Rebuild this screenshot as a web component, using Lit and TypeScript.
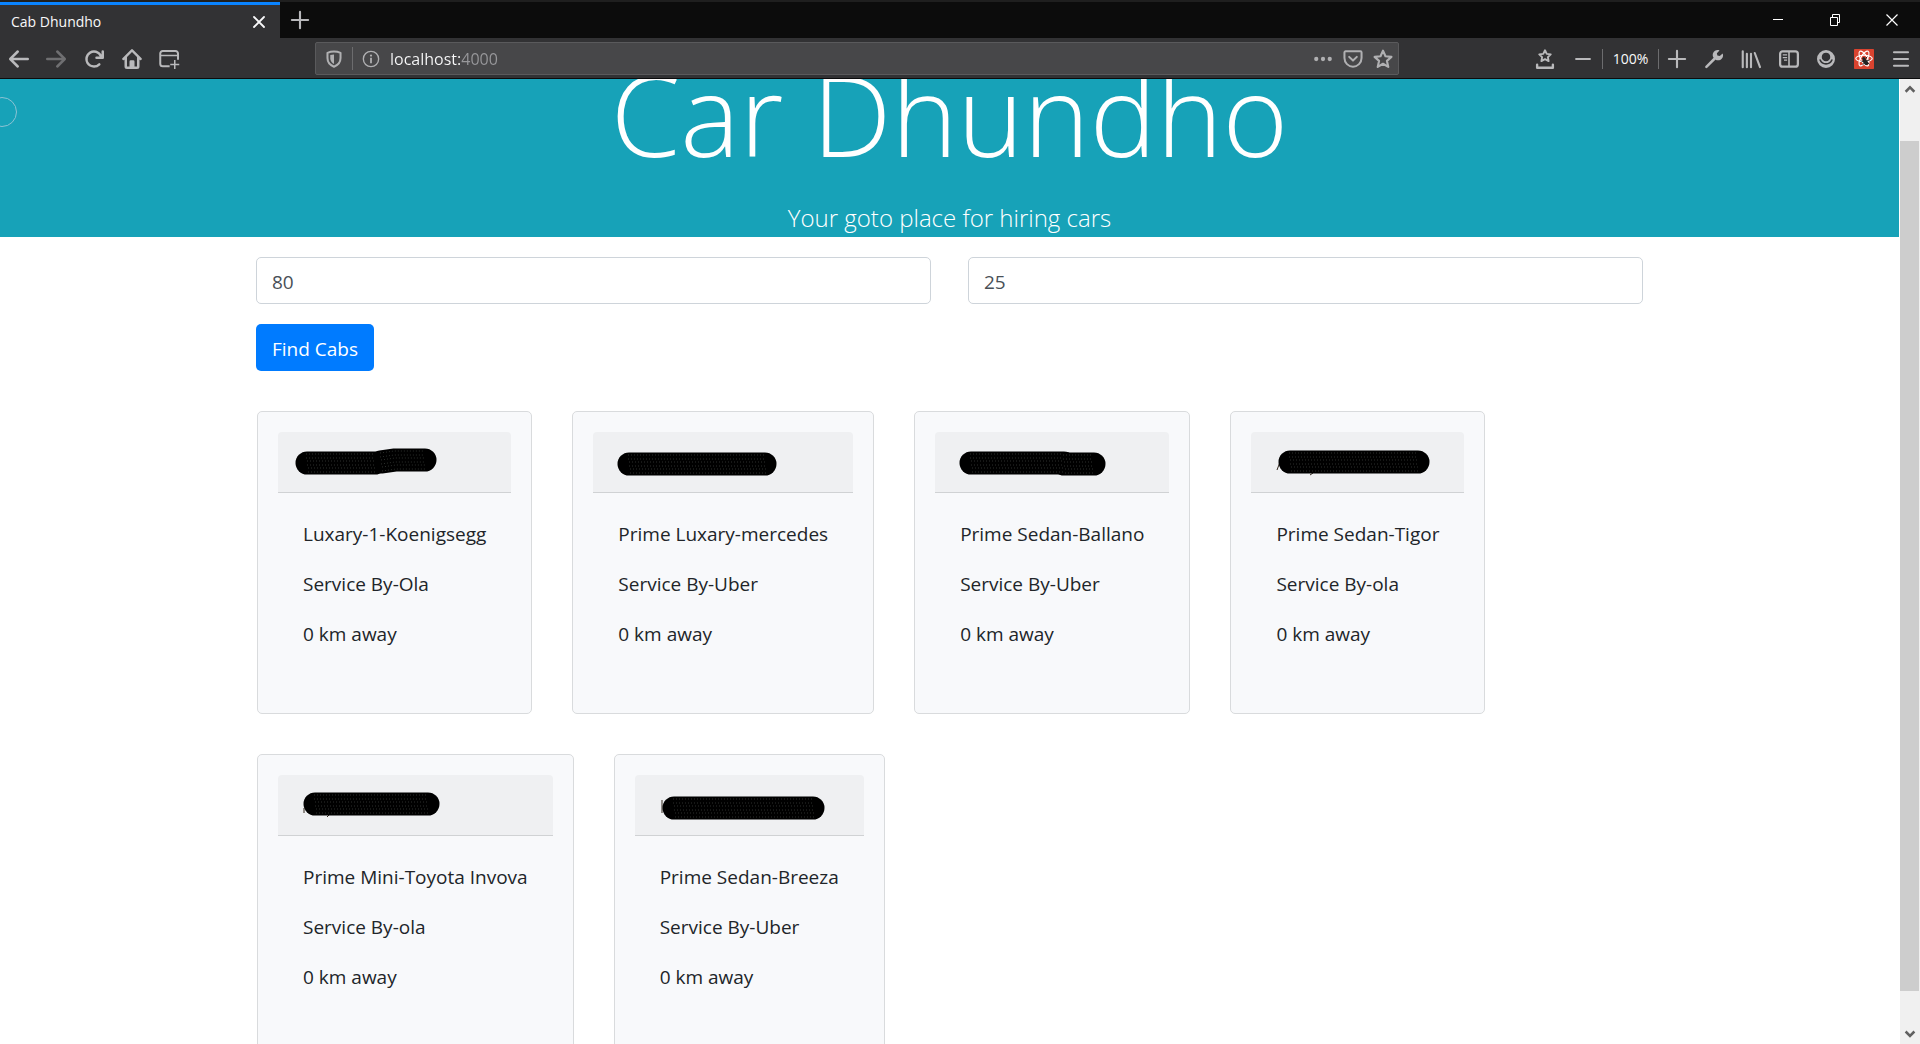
import { LitElement, html, svg, css } from "lit";
import { customElement, property } from "lit/decorators.js";

interface Stroke {
  points: string;
}

interface Cab {
  model: string;
  service: string;
  distance: string;
  strokes: Stroke[];
  traces: string;
}

const CABS: Cab[] = [
  { model: "Luxary-1-Koenigsegg", service: "Ola", distance: "0", strokes: [{ points: "4,16 72,16" }, { points: "78,15 92,13 122,13" }], traces: "" },
  { model: "Prime Luxary-mercedes", service: "Uber", distance: "0", strokes: [{ points: "11,17 147,17" }], traces: "" },
  { model: "Prime Sedan-Ballano", service: "Uber", distance: "0", strokes: [{ points: "11,16 104,16" }, { points: "104,17 134,17" }], traces: "" },
  { model: "Prime Sedan-Tigor", service: "ola", distance: "0", strokes: [{ points: "14,15 142,15" }], traces: "M1 23 L4 15 M34 28 L37 26" },
  { model: "Prime Mini-Toyota Invova", service: "ola", distance: "0", strokes: [{ points: "12,14 125,14" }], traces: "M1 18 V23 M24 27 L27 24" },
  { model: "Prime Sedan-Breeza", service: "Uber", distance: "0", strokes: [{ points: "14,18 153,18" }], traces: "M2 10 V23" },
];

const icons = {
  back: svg`<path d="M15 7H3.414l4.293-4.293a1 1 0 0 0-1.414-1.414l-6 6a1 1 0 0 0 0 1.414l6 6a1 1 0 0 0 1.414-1.414L3.414 9H15a1 1 0 0 0 0-2z"/>`,
  forward: svg`<path d="M1 7h11.586L8.293 2.707a1 1 0 0 1 1.414-1.414l6 6a1 1 0 0 1 0 1.414l-6 6a1 1 0 0 1-1.414-1.414L12.586 9H1a1 1 0 0 1 0-2z"/>`,
  reload: svg`<path d="M15 1a1 1 0 0 0-1 1v2.418A6.995 6.995 0 1 0 8 15a6.954 6.954 0 0 0 4.95-2.05 1 1 0 0 0-1.414-1.414A5.019 5.019 0 1 1 12.549 6H10a1 1 0 0 0 0 2h5a1 1 0 0 0 1-1V2a1 1 0 0 0-1-1z"/>`,
  home: svg`<path fill-rule="evenodd" d="M8.7.3a1 1 0 0 0-1.4 0l-7 7a1 1 0 0 0 1.4 1.4l.3-.3V14a2 2 0 0 0 2 2h8a2 2 0 0 0 2-2V8.400l.3.3a1 1 0 0 0 1.400-1.400zM12 14h-2v-4a1 1 0 0 0-1-1H7a1 1 0 0 0-1 1v4H4V6.400l4-4 4 4z"/><path d="M7.200 11h1.600v3H7.200z"/>`,
  newWindow: svg`<g fill="none" stroke="currentColor"><path stroke-width="1.600" d="M8.500 13.800H3A2 2 0 0 1 1 11.800V3.600A2 2 0 0 1 3 1.600h10.200a2 2 0 0 1 2 2v5"/><path stroke-width="1.200" d="M1 5.200h14.200"/><path stroke-width="1.200" d="M12.600 8.700v7.300M9 12.300h7.200"/></g>`,
  shield: svg`<path fill="none" stroke="currentColor" stroke-width="1.800" stroke-linejoin="round" d="M8 1.400c2 0 4 .4 5.800 1.200v4.600c0 3.400-2 6.200-5.800 7.700-3.800-1.500-5.800-4.300-5.800-7.700V2.600C4 1.800 6 1.400 8 1.400z"/><path d="M8 4c-1.200 0-2.300.2-3.300.5V7.300c0 2.200 1.200 4 3.300 5.100z"/>`,
  info: svg`<circle cx="8" cy="8" r="6.800" fill="none" stroke="currentColor" stroke-width="1.200"/><circle cx="8" cy="4.900" r="1"/><path d="M7.200 6.800h1.600v5H7.200z"/>`,
  dots: svg`<circle cx="2" cy="8" r="1.900"/><circle cx="8" cy="8" r="1.900"/><circle cx="14" cy="8" r="1.900"/>`,
  pocket: svg`<path fill="none" stroke="currentColor" stroke-width="1.800" stroke-linejoin="round" d="M1.400 1.200h13.200a1 1 0 0 1 1 1v5a7.600 7.600 0 0 1-15.200 0V2.200a1 1 0 0 1 1-1z"/><path fill="none" stroke="currentColor" stroke-width="1.800" stroke-linecap="round" stroke-linejoin="round" d="M4.600 6.100 8 9.400l3.400-3.300"/>`,
  star: svg`<path fill="none" stroke="currentColor" stroke-width="1.900" stroke-linejoin="round" d="M8 .6l2.200 4.900 5.300.6-4 3.600 1.200 5.300L8 12.200l-4.700 2.800 1.200-5.300-4-3.600 5.300-.6z"/>`,
  starTray: svg`<path fill="none" stroke="currentColor" stroke-width="1.500" stroke-linejoin="round" d="M8 1l1.400 2.900 3.200.4-2.300 2.200.6 3.200L8 8.100 5.100 9.700l.6-3.200-2.300-2.200 3.200-.4z"/><path fill="none" stroke="currentColor" stroke-width="1.900" stroke-linecap="round" stroke-linejoin="round" d="M1.700 12.600V15h12.600v-2.400"/>`,
  minus: svg`<path fill="none" stroke="currentColor" stroke-width="1.700" stroke-linecap="round" d="M2.500 8h11"/>`,
  plus: svg`<path fill="none" stroke="currentColor" stroke-width="1.700" stroke-linecap="round" d="M1.500 8h13M8 1.500v13"/>`,
  wrench: svg`<path fill="none" stroke="currentColor" stroke-width="2" stroke-linecap="round" d="M1.900 14.300 8.600 7.600"/><path d="M14.900 3.600 12.600 5.600 10.700 5.200 10.300 3.400 12.400 1.200C10.500.4 8.200 1.200 7.300 3.200c-.5 1.200-.4 2.300.1 3.300L9.600 8.700c1 .5 2.200.5 3.300 0 2-.9 2.900-3.200 2-5.100z"/>`,
  library: svg`<g fill="none" stroke="currentColor" stroke-width="1.700" stroke-linecap="round"><path d="M1.400 1.800v12.800M4.700 3.800v10.800M8 3.800v10.800M11 3.200l4.200 11.300"/></g>`,
  sidebar: svg`<rect x=".9" y="1.900" width="14.200" height="12.200" rx="2" fill="none" stroke="currentColor" stroke-width="1.800"/><path fill="none" stroke="currentColor" stroke-width="1.300" d="M8 2v12"/><path fill="none" stroke="currentColor" d="M3 4.700h3.500M3 6.800h3.500M4 8.900h2.500"/>`,
  account: svg`<path fill-rule="evenodd" d="M8 .8a7.200 7.200 0 1 0 0 14.400A7.200 7.200 0 0 0 8 .8zM8 2.900a3.400 3.400 0 1 1 0 6.800 3.400 3.400 0 0 1 0-6.800z"/><path fill="none" stroke="#323234" stroke-width="1.300" stroke-linecap="round" d="M3.300 8.800c.8 1.900 2.600 3.100 4.700 3.100s3.900-1.200 4.700-3.100"/>`,
  menu: svg`<path fill="none" stroke="currentColor" stroke-width="1.700" stroke-linecap="round" d="M2.400 2.600h11.200M2.400 8h11.200M2.400 13.400h11.200"/>`,
  react: svg`<rect width="16" height="16" rx=".6" fill="#d9432f"/><g fill="none" stroke="#fff" stroke-width=".9"><ellipse cx="8" cy="7.600" rx="6.600" ry="2.600"/><ellipse cx="8" cy="7.600" rx="6.600" ry="2.600" transform="rotate(60 8 7.600)"/><ellipse cx="8" cy="7.600" rx="6.600" ry="2.600" transform="rotate(120 8 7.600)"/></g><ellipse cx="9.200" cy="10.400" rx="1.700" ry="2.700" transform="rotate(-35 9.200 10.400)" fill="#222"/><circle cx="7.800" cy="7.600" r="1.200" fill="#222"/><path d="M5.900 9.600l2 .5M6.800 12.600l1.500-1.300M9.400 7.800l.8-1.400M10.600 9.200l1.900-.4M11 11l1.500 1.300" stroke="#222" stroke-width=".8"/>`,
  tabClose: svg`<path fill="none" stroke="currentColor" stroke-width="1.800" stroke-linecap="round" d="M3 3l10 10M13 3 3 13"/>`,
  winMin: svg`<path fill="none" stroke="currentColor" d="M3 7.500h10"/>`,
  winRestore: svg`<path fill="none" stroke="currentColor" d="M3.500 5.500h7v8h-7zM5.500 5.500v-3h7v8h-2"/>`,
  winClose: svg`<path fill="none" stroke="currentColor" stroke-width="1.200" d="M2.500 2.500l11 11M13.500 2.500l-11 11"/>`,
  up: svg`<path fill="none" stroke="currentColor" stroke-width="2" d="M4.500 10.200 8 6.700l3.500 3.500"/>`,
  down: svg`<path fill="none" stroke="currentColor" stroke-width="2" d="M4.500 6 8 9.500 11.500 6"/>`,
};

const icon = (name: keyof typeof icons) =>
  html`<svg class="icon" viewBox="0 0 16 16" fill="currentColor" aria-hidden="true">${icons[name]}</svg>`;

const button = (name: keyof typeof icons, label: string, extra = "") =>
  html`<button type="button" class="tool ${extra}" aria-label=${label}>${icon(name)}</button>`;

const shared = css`
  *, *::before, *::after { box-sizing: border-box; }
  button {
    margin: 0; padding: 0; border: 0; background: none; color: inherit;
    font: inherit; display: flex; align-items: center; justify-content: center;
  }
  .icon { display: block; width: 20px; height: 20px; overflow: visible; }
`;

@customElement("browser-chrome")
export class BrowserChrome extends LitElement {
  static styles = [shared, css`
    :host { display: block; flex: none; font: 14px/20px "Open Sans", sans-serif; color: #b9b9bb; background: #323234; border-bottom: 1px solid #0c0c0d; }
    .tabs { display: flex; height: 38px; background: #0c0c0c; border-top: 2px solid #1f1f1f; }
    .tab { width: 280px; display: flex; align-items: center; background: #323234; border-top: 3px solid #0a84ff; padding-left: 11px; color: #f9f9fa; }
    .tab-title { flex: 1; }
    .tab .tool { width: 42px; height: 33px; }
    .new { width: 40px; }
    .gap { flex: 1; }
    .win { width: 57px; color: #fff; }
    .win .icon, .tab .icon { width: 16px; height: 16px; }
    .toolbar { display: flex; height: 40px; padding: 4px 0 3px; }
    .group { display: flex; }
    .nav { width: 188px; }
    .extras { width: 225px; }
    .nav .tool, .extras .tool { flex: 1; }
    .dim { color: #6f6f71; }
    .url { flex: 1; display: flex; align-items: center; margin: 0 127px; background: #474749; border: 1px solid #5a5a5c; border-radius: 2px; color: #b0b0b2; }
    .site { width: 36px; }
    .page { width: 30px; }
    .page .icon, .site .icon { width: 18px; height: 18px; }
    .url .rule { height: 23px; }
    .rule { width: 1px; height: 20px; background: #6c6c6e; align-self: center; }
    .address {
      flex: 1; min-width: 0; border: 0; outline: 0; padding: 0 1px; height: 28px;
      font: 16px/28px "Open Sans", sans-serif; color: transparent;
      background: linear-gradient(90deg, #f9f9fa 71px, #98989b 71px); background-clip: text; -webkit-background-clip: text;
    }
    .zoom-out { width: 38px; }
    .zoom-in { width: 36px; }
    .level { width: 55px; color: #f9f9fa; }
  `];

  render() {
    return html`
      <div class="tabs">
        <div class="tab"><span class="tab-title">Cab Dhundho</span>${button("tabClose", "Close tab")}</div>
        ${button("plus", "New tab", "new")}
        <div class="gap"></div>
        ${button("winMin", "Minimize", "win")}
        ${button("winRestore", "Restore", "win")}
        ${button("winClose", "Close", "win")}
      </div>
      <div class="toolbar">
        <div class="group nav">
          ${button("back", "Back")}${button("forward", "Forward", "dim")}${button("reload", "Reload")}
          ${button("home", "Home")}${button("newWindow", "New window")}
        </div>
        <div class="url">
          ${button("shield", "Tracking protection", "site")}
          <span class="rule"></span>
          ${button("info", "Site information", "site")}
          <input class="address" type="text" aria-label="Address" .value=${"localhost:4000"} />
          ${button("dots", "Page actions", "page")}${button("pocket", "Save to Pocket", "page")}${button("star", "Bookmark", "page")}
        </div>
        <div class="group">
          ${button("starTray", "Bookmarks", "zoom-out")}${button("minus", "Zoom out", "zoom-out")}
          <span class="rule"></span>
          <button type="button" class="level" aria-label="Reset zoom">100%</button>
          <span class="rule"></span>
          ${button("plus", "Zoom in", "zoom-in")}
        </div>
        <div class="group extras">
          ${button("wrench", "Developer tools")}${button("library", "Library")}${button("sidebar", "Sidebars")}
          ${button("account", "Account")}${button("react", "React tools")}${button("menu", "Menu")}
        </div>
      </div>`;
  }
}

@customElement("cab-card")
export class CabCard extends LitElement {
  @property({ attribute: false }) cab!: Cab;

  static styles = [shared, css`
    :host { display: block; }
    .card { background: #f8f9fb; border: 1px solid #d9dbdd; border-radius: 5px; padding: 20px 20px 19px; }
    .head { padding: 15px 25px; background: #eff0f2; border-bottom: 1px solid #d0d2d4; border-radius: 4px 4px 0 0; }
    .mark { display: block; width: 120px; height: 30px; overflow: visible; }
    .ink { fill: none; stroke: #000; stroke-width: 23; stroke-linecap: round; stroke-linejoin: round; }
    .grain { fill: none; stroke: #2c2f2c; stroke-width: 1; stroke-dasharray: 1 2; }
    .trace { fill: none; stroke: #33281f; stroke-width: 1; }
    .body { padding: 26px 25px 25px; }
    p { margin: 0 0 20px; white-space: nowrap; }
  `];

  render() {
    const { model, service, distance, strokes, traces } = this.cab;
    return html`
      <article class="card">
        <div class="head">
          <svg class="mark" aria-hidden="true">
            <path class="trace" d=${traces}></path>
            ${strokes.map((s) => svg`<polyline class="ink" points=${s.points}></polyline>`)}
            ${strokes.map((s) => [-9, -5, -2, 2, 5, 9].map((dy) =>
              svg`<polyline class="grain" points=${s.points} transform=${`translate(${dy % 2} ${dy})`}></polyline>`))}
          </svg>
        </div>
        <div class="body">
          <p>${model}</p>
          <p>Service By-${service}</p>
          <p>${distance} km away</p>
        </div>
      </article>`;
  }
}

@customElement("app-root")
export class AppRoot extends LitElement {
  static styles = [shared, css`
    :host { display: flex; flex-direction: column; height: 100vh; overflow: hidden; font: 19px/30px "Open Sans", sans-serif; color: #212529; background: #fff; }
    .view { flex: 1; min-height: 0; display: flex; }
    .page { flex: 1; min-width: 0; overflow: hidden; position: relative; }
    .hero { height: 158px; display: flex; flex-direction: column; justify-content: flex-end; align-items: center; overflow: hidden; background: #17a2b8; color: #fff; }
    h1 { flex: none; margin: 0 0 13px; font-size: 112px; line-height: 144px; font-weight: 300; }
    .lead { flex: none; margin: 0; font-size: 24px; line-height: 38px; font-weight: 300; }
    .ring { position: absolute; left: -13px; top: 18px; width: 30px; height: 30px; border: 1px solid #8cc3d4; border-radius: 15px; }
    .container { max-width: 1425px; margin: 0 auto; padding: 20px 19px 0; }
    .fields { display: grid; grid-template-columns: 1fr 1fr; gap: 37px; }
    .field { width: 100%; height: 47px; padding: 2px 15px 0; border: 1px solid #ced4da; border-radius: 5px; font: inherit; color: #495057; background: #fff; outline: 0; }
    .find { margin-top: 20px; height: 47px; padding: 2px 16px 0; border-radius: 5px; background: #007bff; color: #fff; }
    .cards { display: flex; flex-wrap: wrap; gap: 40px; padding: 40px 1px; }
    .scroll { flex: none; width: 21px; display: flex; flex-direction: column; background: #f0f0f0; border-left: 1px solid #fff; color: #606060; }
    .arrow { height: 20px; }
    .track { flex: 1; display: flex; flex-direction: column; padding-right: 1px; }
    .before { flex: 42; }
    .thumb { flex: 850; background: #cdcdcd; }
    .after { flex: 33; }
  `];

  render() {
    return html`
      <browser-chrome></browser-chrome>
      <div class="view">
        <main class="page">
          <header class="hero">
            <h1>Car Dhundho</h1>
            <p class="lead">Your goto place for hiring cars</p>
          </header>
          <div class="ring"></div>
          <div class="container">
            <form @submit=${(e: Event) => e.preventDefault()}>
              <div class="fields">
                <input class="field" type="text" aria-label="Latitude" .value=${"80"} />
                <input class="field" type="text" aria-label="Longitude" .value=${"25"} />
              </div>
              <button class="find" type="submit">Find Cabs</button>
            </form>
            <section class="cards">${CABS.map((cab) => html`<cab-card .cab=${cab}></cab-card>`)}</section>
          </div>
        </main>
        <div class="scroll">
          <button type="button" class="arrow" aria-label="Scroll up">${icon("up")}</button>
          <div class="track"><div class="before"></div><div class="thumb"></div><div class="after"></div></div>
          <button type="button" class="arrow" aria-label="Scroll down">${icon("down")}</button>
        </div>
      </div>`;
  }
}
